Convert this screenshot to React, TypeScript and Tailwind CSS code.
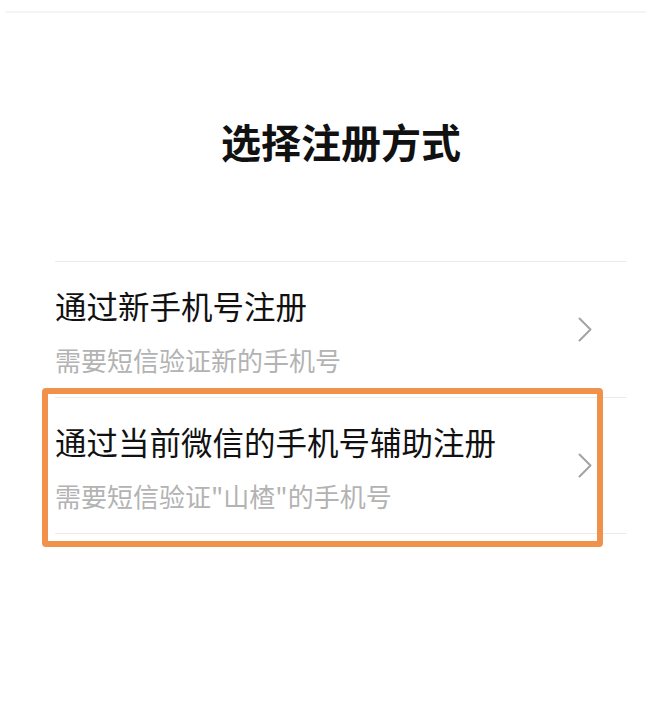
import React from "react";

const font = { fontFamily: '"Noto Sans CJK SC", "Noto Sans", sans-serif' };

function Chevron() {
  return (
    <svg width="14" height="25" viewBox="0 0 14 25" className="shrink-0">
      <path d="M1.5 1.5 L12.5 12.5 L1.5 23.5" fill="none" stroke="#a3a3a3" strokeWidth="2" strokeLinecap="round" strokeLinejoin="round" />
    </svg>
  );
}

function Item({ title, sub, highlight }: { title: string; sub: string; highlight?: boolean }) {
  return (
    <div className="relative flex items-center border-b border-[#ececec] pr-[35px]">
      <div className="flex-1 pt-[23px] pb-[20px]">
        <div className="text-[31.5px] leading-[40px] text-[#111111]">{title}</div>
        <div className="mt-[18px] text-[26px] leading-[34px] text-[#b3b3b3]">{sub}</div>
      </div>
      <Chevron />
      {highlight && (
        <div className="absolute left-[-13px] top-[-10px] h-[159px] w-[561px] rounded-[4px] border-[6px] border-[#f0924c]" />
      )}
    </div>
  );
}

export default function App() {
  return (
    <div className="relative h-[702px] w-[646px] overflow-hidden bg-white" style={font}>
      <div className="pt-[11px] pl-[5px]">
        <div className="h-[2px] bg-[#f5f5f5]" />
      </div>
      <div className="pl-[55px] pr-[19px]">
        <div className="pt-[100px] text-center text-[40px] font-bold leading-[56px] text-[#111111]">选择注册方式</div>
        <div className="mt-[92px] border-b border-[#ececec]" />
        <Item title="通过新手机号注册" sub="需要短信验证新的手机号" />
        <Item title="通过当前微信的手机号辅助注册" sub={'需要短信验证"山楂"的手机号'} highlight />
      </div>
    </div>
  );
}
